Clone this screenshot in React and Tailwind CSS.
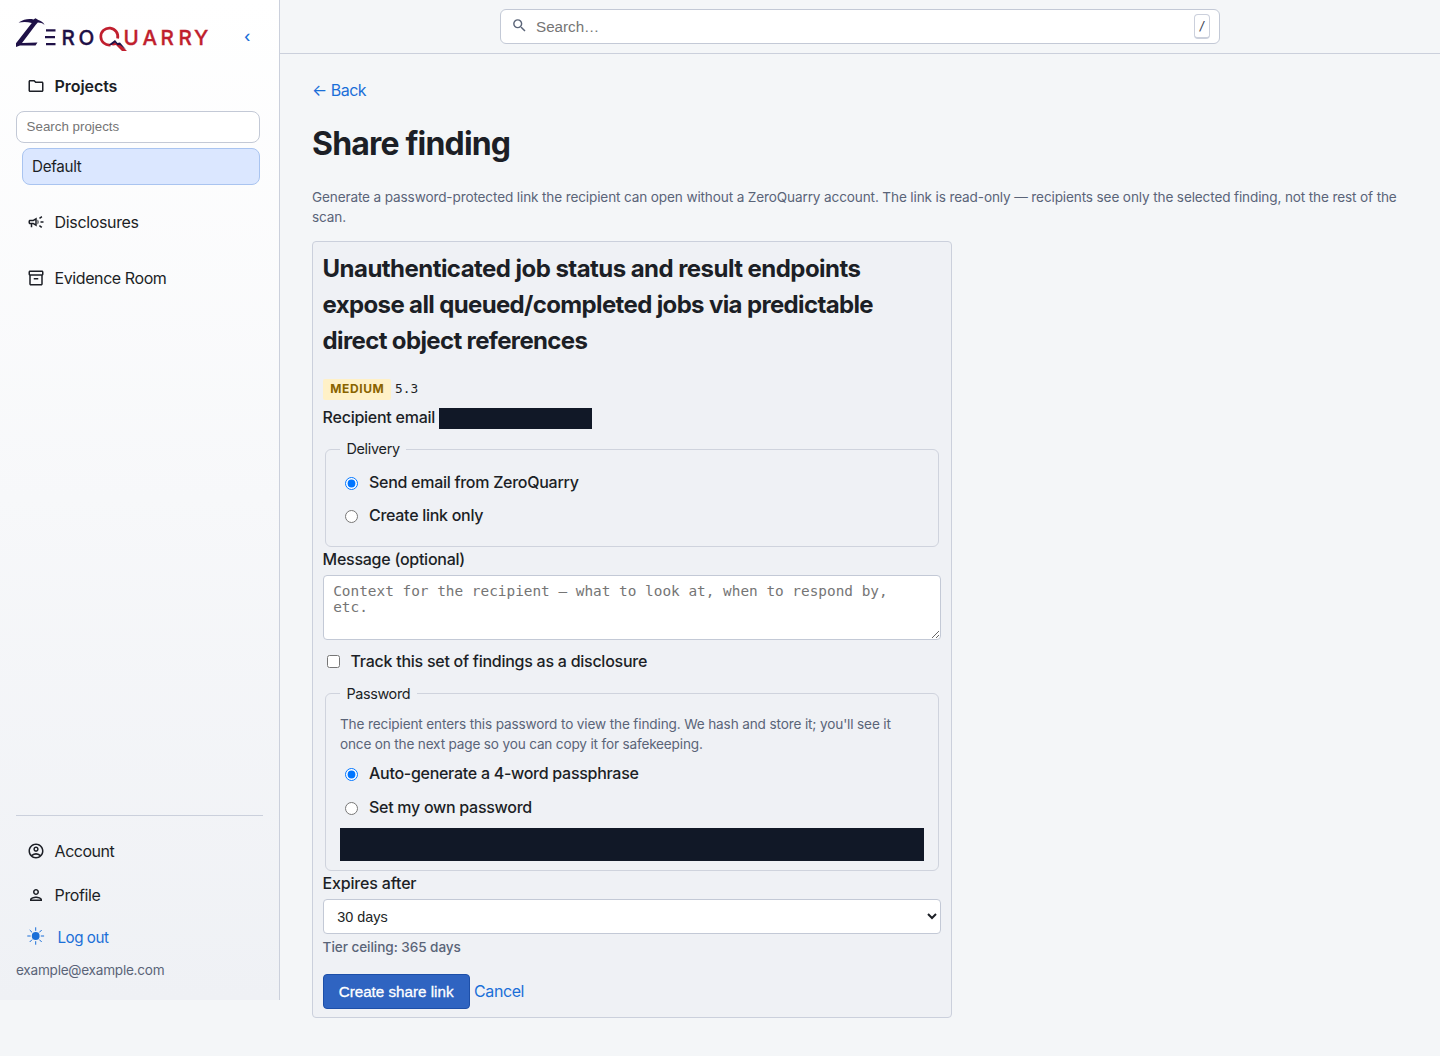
import React, { useState } from 'react';
import {
  MdOutlineFolder,
  MdOutlineCampaign,
  MdOutlineInventory2,
  MdOutlineAccountCircle,
  MdOutlinePerson,
  MdSearch,
} from 'react-icons/md';

const expiryOptions = ['7 days', '30 days', '90 days', '365 days'];

function Logo() {
  return (
    <svg width="193" height="34" viewBox="0 0 193 34" role="img" aria-label="ZeroQuarry">
      {/* pickaxe */}
      <path d="M2.500 4.600C8 .9 13 .6 17.500 1.400l2-1.200 2.800 1.700c2.500.6 5 2.200 6.300 5-2.300-1.700-4.600-2.400-6.800-2.300l-2 2.200L6 25 21.500 24.600 19.500 27.500H4L0 29v-3.800L15.800 4.900C11 3.800 7 3.800 2.500 4.600Z" fill="#1f1147" />
      <path d="M30 12.400H39.500M29 19.200H39M30 26.200H39.500" stroke="#1f1147" strokeWidth="2.300" />
      <g fontFamily="Inter, sans-serif" fontSize="20.600" fontWeight="500" strokeWidth=".35">
        <text x="45.500 62.500" y="27" fill="#1f1147" stroke="#1f1147">RO</text>
        <text x="107.500 126.500 144.500 162.500 178" y="27" fill="#c01f2e" stroke="#c01f2e">UARRY</text>
      </g>
      {/* ring with the cracked tail */}
      <path d="M94.500 27A8.500 8.500 0 1 1 101.600 20.500" fill="none" stroke="#c01f2e" strokeWidth="2.700" />
      <path d="m94 26.500 5-2.500 3 2.500 2-.5L111 33h-5l-6-6-3 .5Z" fill="#c01f2e" />
      <path d="m93 26.500 6-4.500 2.500 3 2.500-.5 6 7-6-4.500-2.500.3-2.500-2.800-4 2.800Z" fill="#1f1147" />
    </svg>
  );
}

function SunIcon() {
  return (
    <svg width="18" height="18" viewBox="0 0 18 18" fill="none" stroke="#1b6fd8" strokeWidth="1">
      <circle cx="8.700" cy="9" r="3.900" fill="#1b6fd8" stroke="none" />
      <path d="M8.700 .3v3.500M8.700 14.200v3.500M.3 9h3.300M13.800 9h3.300M2.700 3l2.400 2.400M12.300 12.600 14.700 15M2.700 15l2.400-2.400M12.300 5.400 14.700 3" />
    </svg>
  );
}

function NavItem({ icon: Icon, label, className }) {
  return (
    <a href="#" className={`flex items-center pl-[10.600px] text-base ${className}`}>
      <Icon className="w-[18px] h-[18px] mr-[10px]" />
      {label}
    </a>
  );
}

function Sidebar() {
  return (
    <aside className="w-[280px] h-[1000px] shrink-0 flex flex-col px-4 border-r border-[#cbd0dc] bg-linear-to-b from-white to-[#eff1f5]">
      <div className="flex items-start h-[64px] pt-[18px]">
        <Logo />
        <button type="button" className="ml-[35px] mt-[6px] text-base leading-6 font-medium text-[#1b6fd8]">‹</button>
      </div>

      <NavItem icon={MdOutlineFolder} label="Projects" className="h-11 font-semibold tracking-[-0.080px]" />
      <input
        type="text"
        placeholder="Search projects"
        className="mt-[3px] h-8 w-[244px] px-[9.600px] pb-[2px] rounded-lg border border-[#c3c9d6] bg-white font-['Liberation_Sans',sans-serif] text-[13.330px] placeholder:text-[#757575]"
      />
      <a href="#" className="mt-[5px] ml-[6px] w-[238px] h-[37px] px-[9px] pt-[2px] flex items-center rounded-lg border border-[#a9c4f0] bg-[#dbe7ff] text-[15.200px] tracking-[-0.300px]">
        Default
      </a>
      <NavItem icon={MdOutlineCampaign} label="Disclosures" className="mt-[15px] h-11 tracking-[-0.350px]" />
      <NavItem icon={MdOutlineInventory2} label="Evidence Room" className="mt-3 h-11 tracking-[-0.420px]" />

      <div className="mt-auto w-[247px] h-[185px] border-t border-[#cbd0dc] pt-[13px]">
        <NavItem icon={MdOutlineAccountCircle} label="Account" className="h-11 tracking-[-0.480px]" />
        <NavItem icon={MdOutlinePerson} label="Profile" className="h-11 tracking-[-0.380px]" />
        <a href="#" className="flex items-center h-[42px] pl-[11px] pt-px text-[15.200px] tracking-[-0.480px] text-[#1b6fd8]">
          <span className="mr-[12.500px] -mt-[5px]"><SunIcon /></span>
          Log out
        </a>
        <div className="-mt-[1px] text-[13.600px] leading-6 tracking-[-0.250px] text-[#5a6478]">example@example.com</div>
      </div>
    </aside>
  );
}

function Choice({ label, className, ...props }) {
  return (
    <label className={`flex items-center text-base font-medium leading-6 tracking-[-0.280px] ${className}`}>
      <input {...props} className="w-[13px] h-[13px] mt-[2px] mr-[11px] accent-[#0075ff]" />
      {label}
    </label>
  );
}

function ShareForm() {
  const [delivery, setDelivery] = useState('email');
  const [passwordMode, setPasswordMode] = useState('auto');
  const [expiry, setExpiry] = useState('30 days');

  return (
    <form
      onSubmit={(e) => e.preventDefault()}
      className="mt-[14px] w-[640px] h-[777px] px-[9.600px] pt-[9px] rounded border border-[#cbd0dc] bg-[#eff1f5]"
    >
      <h2 className="w-[600px] text-2xl leading-9 font-bold tracking-[-0.640px]">
        <span className="tracking-[-0.545px]">Unauthenticated job status and result endpoints</span> expose all queued/completed jobs via predictable direct object references
      </h2>

      <div className="mt-[19px] flex items-center h-[22px]">
        <span className="h-[21px] w-[68px] pl-[1.500px] flex items-center justify-center rounded-xs bg-[#fff1c7] text-xs font-bold tracking-[0.600px] text-[#8a6400]">
          MEDIUM
        </span>
        <span className="ml-[4.500px] font-['DejaVu_Sans_Mono',monospace] text-[12.800px]">5.3</span>
      </div>

      <div className="mt-[5px] flex items-center h-6 font-medium tracking-[-0.250px]">
        Recipient email
        <span className="ml-[3.500px] w-[153px] h-[21px] bg-[#111827] mt-[2px]" />
      </div>

      <fieldset className="mx-[2.400px] mt-[8px] h-[110px] pl-[19px] border border-[#cfd3dd] rounded-md">
        <legend className="-ml-[5px] px-[6.400px] h-[24px] text-[14.400px] leading-6 tracking-[-0.270px]">Delivery</legend>
        <Choice type="radio" name="delivery" label="Send email from ZeroQuarry" className="mt-[9px]" checked={delivery === 'email'} onChange={() => setDelivery('email')} />
        <Choice type="radio" name="delivery" label="Create link only" className="mt-[9px]" checked={delivery === 'link'} onChange={() => setDelivery('link')} />
      </fieldset>

      <label className="block h-6 leading-6 font-medium tracking-[-0.260px]">Message (optional)</label>
      <textarea
        placeholder="Context for the recipient — what to look at, when to respond by, etc."
        className="block mt-1 w-[618px] h-[65px] px-[9.600px] py-[7px] rounded border border-[#c3c9d6] bg-white font-['DejaVu_Sans_Mono',monospace] text-[14.400px] leading-4 placeholder:text-[#757575]"
      />
      <label className="flex items-center mt-[9px] ml-1 font-medium leading-6 tracking-[-0.260px]">
        <input type="checkbox" className="w-[13px] h-[13px] mr-[11px]" />
        Track this set of findings as a disclosure
      </label>

      <fieldset className="mx-[2.400px] mt-[8px] h-[190px] px-[14px] border border-[#cfd3dd] rounded-md">
        <legend className="px-[6.400px] h-6 text-[14.400px] leading-[26px] tracking-[-0.350px]">Password</legend>
        <p className="mt-[9px] text-[13.600px] leading-5 tracking-[-0.140px] text-[#5a6478]">
          The recipient enters this password to view the finding. We hash and store it; you'll see it<br />
          <span className="tracking-[-0.175px]">once on the next page so you can copy it for safekeeping.</span>
        </p>
        <Choice type="radio" name="password" label="Auto-generate a 4-word passphrase" className="mt-[7px] ml-[5px]" checked={passwordMode === 'auto'} onChange={() => setPasswordMode('auto')} />
        <Choice type="radio" name="password" label="Set my own password" className="mt-[10px] ml-[5px]" checked={passwordMode === 'own'} onChange={() => setPasswordMode('own')} />
        <div className="mt-[9px] h-[33px] w-[584px] bg-[#111827]" />
      </fieldset>

      <label className="block h-6 leading-6 font-medium tracking-[-0.180px]">Expires after</label>
      <select
        value={expiry}
        onChange={(e) => setExpiry(e.target.value)}
        className="block mt-1 w-[618px] h-[35px] pl-[9.600px] rounded border border-[#c3c9d6] bg-white font-['Liberation_Sans',sans-serif] text-[14.400px]"
      >
        {expiryOptions.map((option) => (
          <option key={option}>{option}</option>
        ))}
      </select>
      <p className="mt-[3px] text-[13.600px] leading-5 font-medium tracking-[-0.070px] text-[#5a6478]">Tier ceiling: 365 days</p>

      <div className="mt-[17px] flex items-center">
        <button type="submit" className="w-[147px] h-[35px] pt-px rounded border border-[#1d4fa8] bg-[#2f64c1] font-['Liberation_Sans',sans-serif] text-[15.200px] text-white [-webkit-text-stroke:0.300px_white]">
          Create share link
        </button>
        <a href="#" className="ml-[4.500px] -mt-[2px] tracking-[-0.430px] text-[#1b6fd8]">Cancel</a>
      </div>
    </form>
  );
}

export default function App() {
  return (
    <div className="flex w-[1440px] h-[1056px] overflow-hidden bg-[#f4f6f8] font-[Inter,sans-serif] text-base text-[#1c1f26]">
      <Sidebar />
      <div className="flex-1 min-w-0">
        <header className="h-[54px] flex justify-center pt-[9px] border-b border-[#cbd0dc]">
          <div className="w-[720px] h-[35px] flex items-center pl-[10px] pr-[9px] rounded-md border border-[#c3c9d6] bg-white">
            <MdSearch className="w-[17px] h-[17px] -mt-[3px] text-[#5a6478]" />
            <input type="text" placeholder="Search…" className="flex-1 ml-2 pt-px font-['Liberation_Sans',sans-serif] text-[15.200px] placeholder:text-[#757575]" />
            <kbd className="w-4 h-[25px] flex items-center justify-center rounded border border-b-2 border-[#cbd0dc] bg-white font-['DejaVu_Sans_Mono',monospace] text-xs text-[#3f4757]">/</kbd>
          </div>
        </header>
        <main className="px-8 pt-6">
          <a href="#" className="block leading-6 tracking-[-0.500px] text-[#1b6fd8]">← Back</a>
          <h1 className="mt-[18px] text-[32px] leading-12 font-bold tracking-[-0.820px]">Share finding</h1>
          <p className="mt-[19px] text-[13.600px] leading-5 tracking-[-0.139px] text-[#5a6478]">
            Generate a password-protected link the recipient can open without a ZeroQuarry account. The link is read-only — recipients see only the selected finding, not the rest of the scan.
          </p>
          <ShareForm />
        </main>
      </div>
    </div>
  );
}
